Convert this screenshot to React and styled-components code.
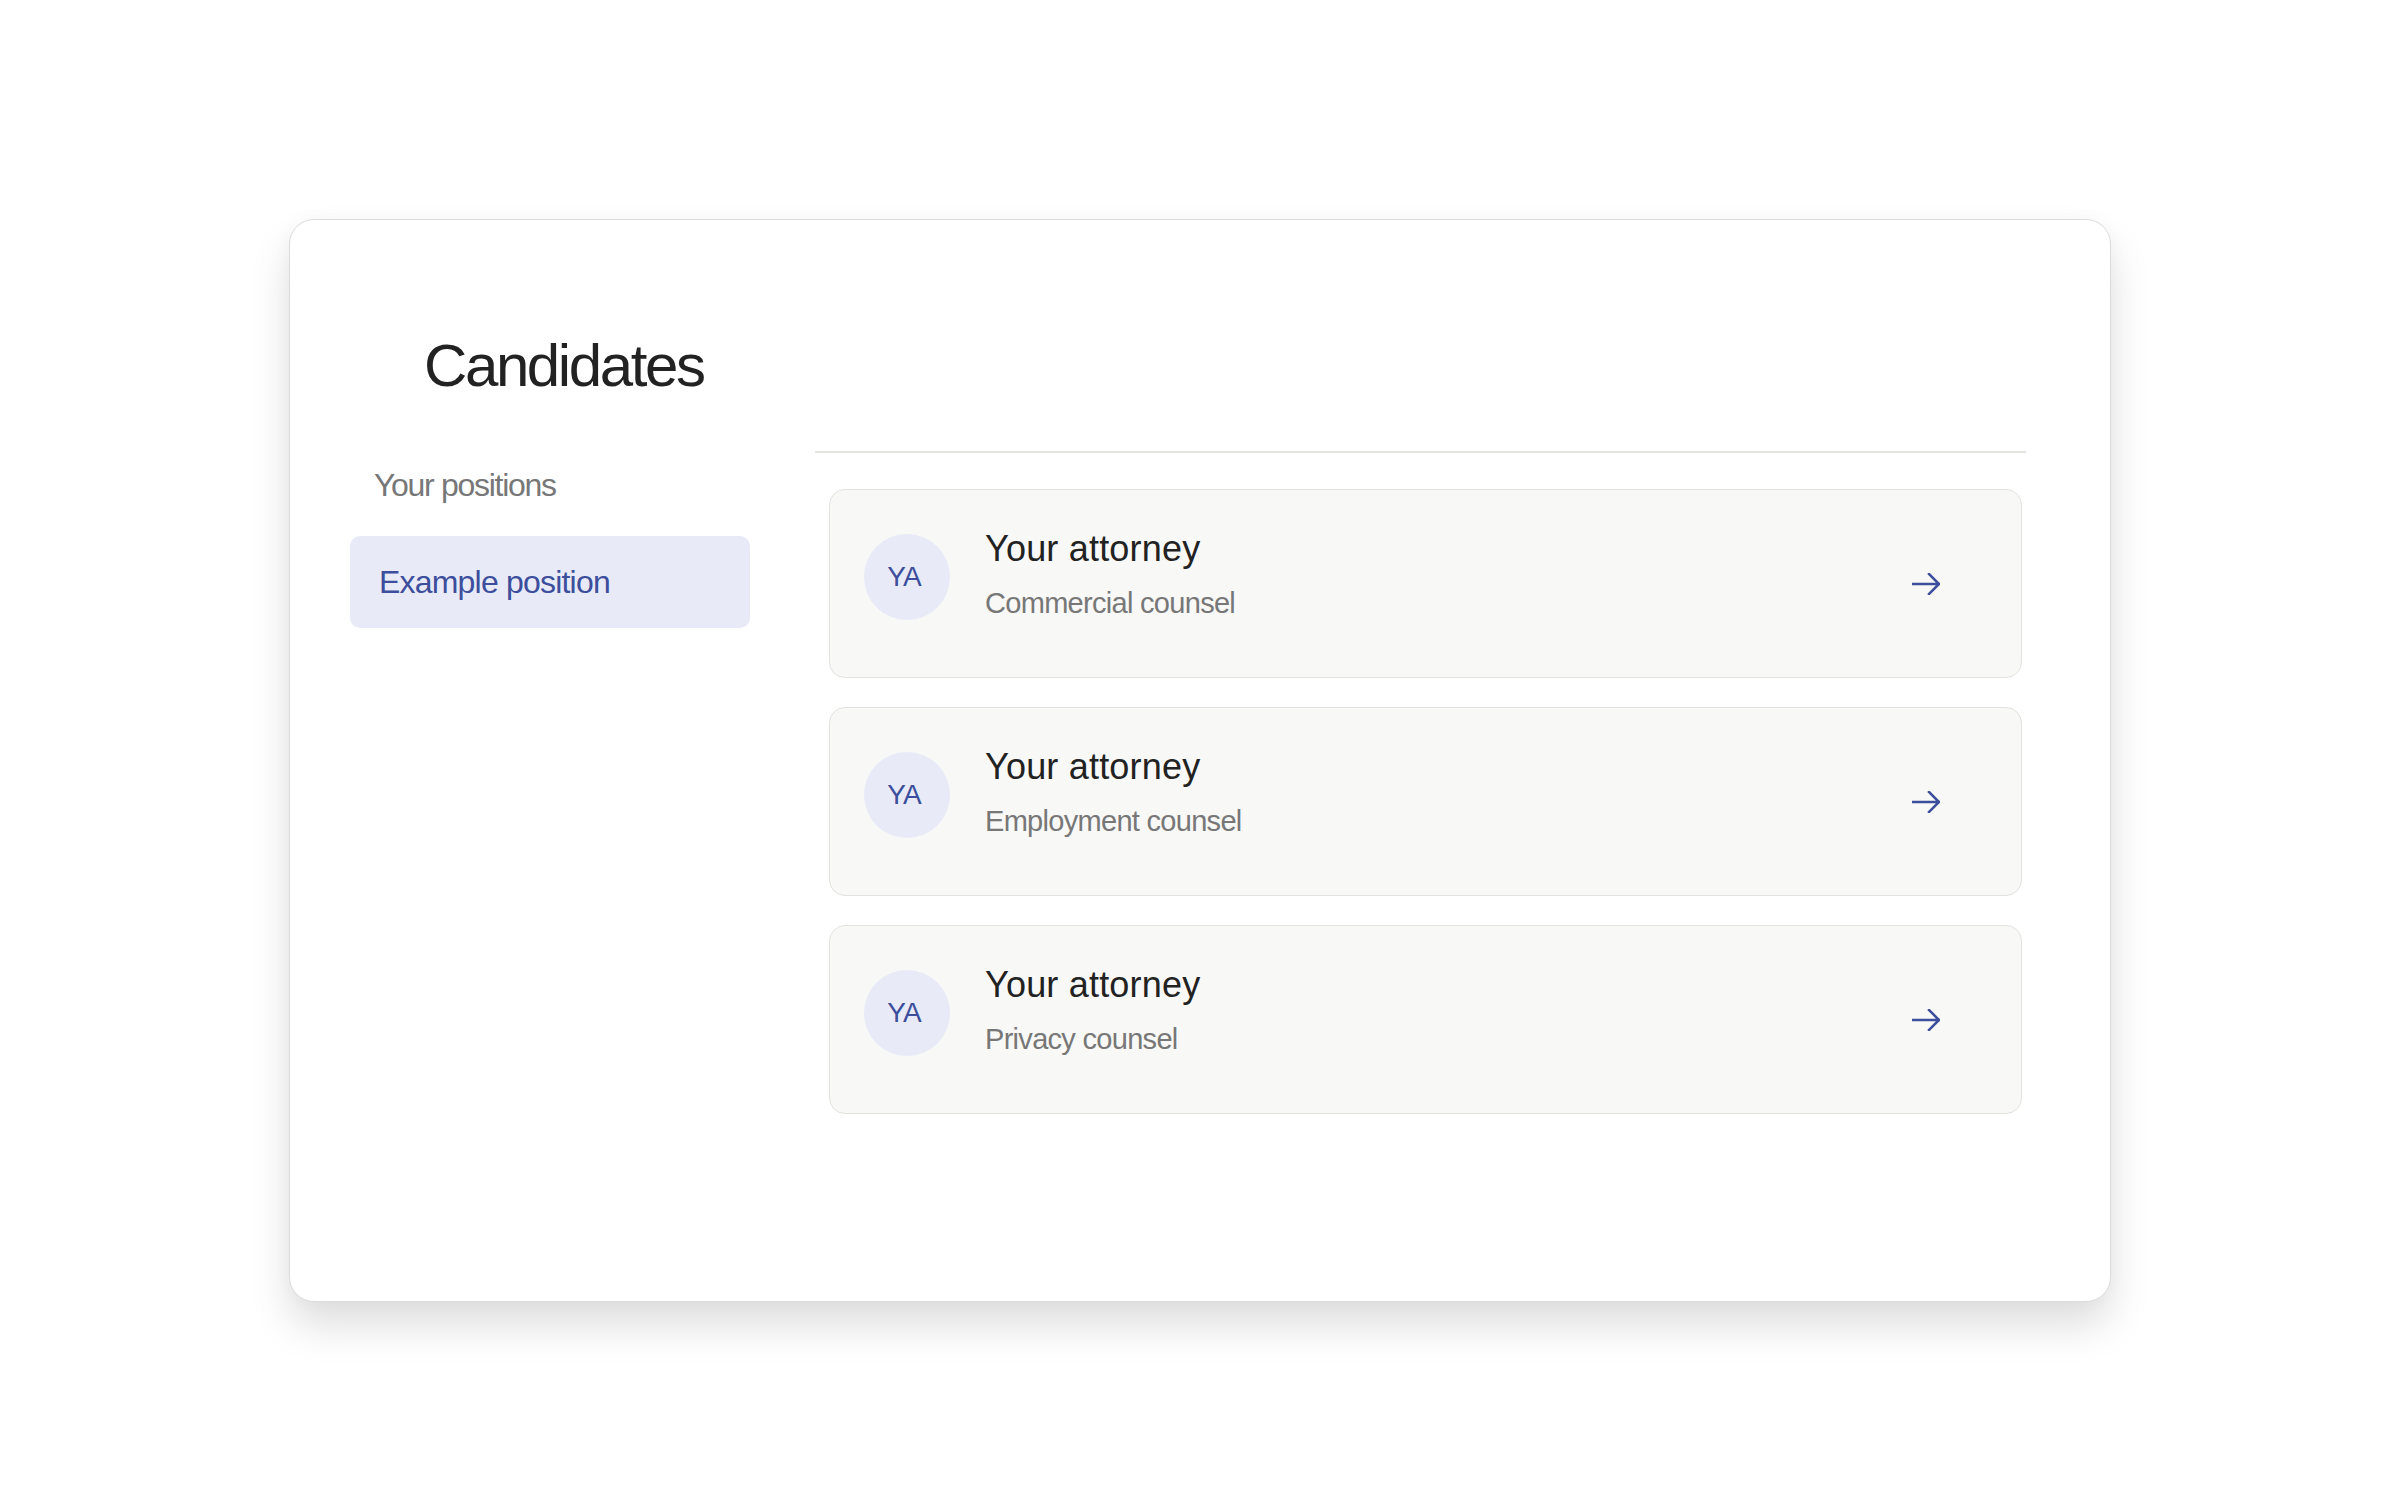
import styled, { createGlobalStyle } from "styled-components";

const GlobalStyle = createGlobalStyle`
  body {
    margin: 0;
    background: #ffffff;
    font-family: "Liberation Sans", Arial, sans-serif;
  }
`;

const Page = styled.div`
  padding-top: 219px;
  min-height: 1500px;
  box-sizing: border-box;
`;

const Panel = styled.section`
  box-sizing: border-box;
  width: 1822px;
  margin: 0 auto;
  padding: 110px 84px 187px 60px;
  background: #ffffff;
  border: 1px solid #dcdcdc;
  border-radius: 25px;
  box-shadow: 0 24px 40px rgba(0, 0, 0, 0.13), 0 0 18px rgba(0, 0, 0, 0.03);
`;

const Title = styled.h1`
  margin: 0 0 49px 74px;
  font-size: 60px;
  line-height: 72px;
  font-weight: 400;
  letter-spacing: -2.4px;
  color: #222222;
`;

const Columns = styled.div`
  display: grid;
  grid-template-columns: 400px 1211px;
  column-gap: 65px;
`;

const Sidebar = styled.nav`
  padding-top: 15px;
`;

const SidebarLabel = styled.div`
  padding-left: 24px;
  margin-bottom: 32px;
  font-size: 32px;
  line-height: 38px;
  letter-spacing: -1.3px;
  color: #777777;
`;

const PositionItem = styled.div`
  box-sizing: border-box;
  height: 92px;
  padding: 27px 29px;
  border-radius: 10px;
  font-size: 32px;
  line-height: 38px;
  letter-spacing: -0.8px;
  background: ${(p) => (p.$active ? "#e8ebf7" : "transparent")};
  color: ${(p) => (p.$active ? "#3c4e9c" : "#555555")};
`;

const CandidateList = styled.div`
  display: flex;
  flex-direction: column;
  gap: 29px;
  padding: 36px 4px 0 14px;
  border-top: 2px solid #e3e3df;
`;

const CandidateRow = styled.div`
  box-sizing: border-box;
  display: flex;
  align-items: flex-start;
  height: 189px;
  padding: 38px 81px 0 34px;
  background: #f8f8f7;
  border: 1px solid #e2e2df;
  border-radius: 16px;
`;

const Avatar = styled.div`
  flex: none;
  box-sizing: border-box;
  display: flex;
  align-items: center;
  justify-content: center;
  width: 86px;
  height: 86px;
  margin-top: 6px;
  padding-right: 6px;
  border-radius: 50%;
  background: #e8ebf7;
  color: #3c4e9c;
  font-size: 28px;
  letter-spacing: -1px;
`;

const Info = styled.div`
  margin-left: 35px;
`;

const Name = styled.div`
  font-size: 36px;
  line-height: 42px;
  letter-spacing: 0.2px;
  color: #222222;
  margin-bottom: 16px;
`;

const Role = styled.div`
  font-size: 29px;
  line-height: 35px;
  letter-spacing: -0.7px;
  color: #777777;
`;

const Arrow = styled.svg`
  flex: none;
  margin-left: auto;
  align-self: center;
  margin-top: -38px;
`;

const candidates = [
  { initials: "YA", name: "Your attorney", role: "Commercial counsel" },
  { initials: "YA", name: "Your attorney", role: "Employment counsel" },
  { initials: "YA", name: "Your attorney", role: "Privacy counsel" },
];

const ArrowIcon = () => (
  <Arrow width="28" height="22" viewBox="0 0 28 22" fill="none">
    <path
      d="M1 11h26M17 1l10 10-10 10"
      stroke="#3c4e9c"
      strokeWidth="2.5"
      strokeLinecap="square"
    />
  </Arrow>
);

export default function App() {
  return (
    <Page>
      <GlobalStyle />
      <Panel>
        <Title>Candidates</Title>
        <Columns>
          <Sidebar>
            <SidebarLabel>Your positions</SidebarLabel>
            <PositionItem $active>Example position</PositionItem>
          </Sidebar>
          <CandidateList>
            {candidates.map((c, i) => (
              <CandidateRow key={i}>
                <Avatar>{c.initials}</Avatar>
                <Info>
                  <Name>{c.name}</Name>
                  <Role>{c.role}</Role>
                </Info>
                <ArrowIcon />
              </CandidateRow>
            ))}
          </CandidateList>
        </Columns>
      </Panel>
    </Page>
  );
}
